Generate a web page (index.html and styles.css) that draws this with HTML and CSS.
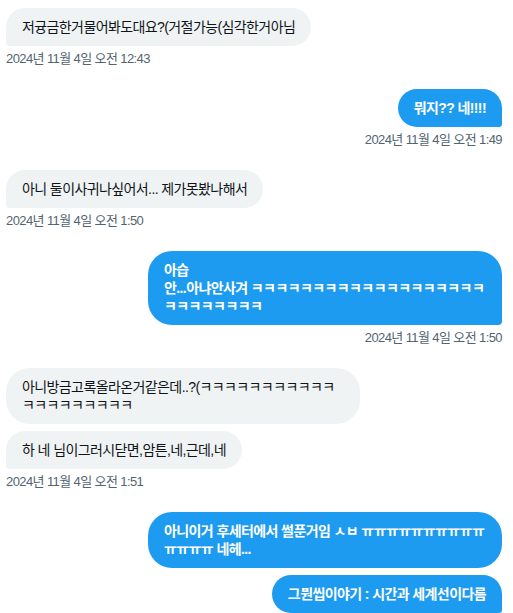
FILE: index.html
```html
<!DOCTYPE html>
<html lang="ko">

<head>
    <meta charset="UTF-8">
    <meta name="viewport" content="width=device-width, initial-scale=1.0">
    <title>메시지</title>
    <link rel="stylesheet" href="styles.css">
</head>

<body>
    <div class="chat">
        <div class="group in">
            <div class="bubble">저귱금한거물어봐도대요?(거절가능(심각한거아님</div>
            <div class="time">2024년 11월 4일 오전 12:43</div>
        </div>

        <div class="group out">
            <div class="bubble">뭐지?? 네!!!!</div>
            <div class="time">2024년 11월 4일 오전 1:49</div>
        </div>

        <div class="group in">
            <div class="bubble">아니 둘이사귀나싶어서... 제가못봤나해서</div>
            <div class="time">2024년 11월 4일 오전 1:50</div>
        </div>

        <div class="group out">
            <div class="bubble">아습<br>안...아냐안사겨 ㅋㅋㅋㅋㅋㅋㅋㅋㅋㅋㅋㅋㅋㅋㅋㅋㅋㅋㅋㅋㅋㅋㅋㅋㅋㅋㅋ</div>
            <div class="time">2024년 11월 4일 오전 1:50</div>
        </div>

        <div class="group in">
            <div class="bubble">아니방금고록올라온거같은데..?(ㅋㅋㅋㅋㅋㅋㅋㅋㅋㅋㅋㅋㅋㅋㅋㅋㅋㅋㅋㅋ</div>
            <div class="bubble">하 네 님이그러시닫면,암튼,네,근데,네</div>
            <div class="time">2024년 11월 4일 오전 1:51</div>
        </div>

        <div class="group out">
            <div class="bubble">아니이거 후세터에서 썰푼거임 ㅅㅂ ㅠㅠㅠㅠㅠㅠㅠㅠㅠㅠㅠㅠㅠㅠ 네헤...</div>
            <div class="bubble">그뭔씹이야기 : 시간과 세계선이다름</div>
            <div class="time">2024년 11월 4일 오전 1:52</div>
        </div>
    </div>
</body>

</html>
```

FILE: styles.css
```css
body {
    margin: 0;
    background-color: #fff;
    font-family: 'Liberation Sans', 'Noto Sans CJK KR', sans-serif;
}

.chat {
    padding: 8px 11px 0 6px;
}

.group {
    display: flex;
    flex-direction: column;
    align-items: flex-start;
    margin-bottom: 22px;
}

.group.out {
    align-items: flex-end;
}

.bubble {
    box-sizing: border-box;
    max-width: 354px;
    padding: 10px 16px;
    font-size: 14px;
    line-height: 18px;
    letter-spacing: -0.6px;
    border-radius: 24px;
    word-break: break-all;
}

.bubble + .bubble {
    margin-top: 7px;
}

.in .bubble {
    background-color: #eff3f4;
    color: #0f1419;
}

.in .bubble:nth-last-child(2) {
    border-bottom-left-radius: 4px;
}

.out .bubble {
    background-color: #1d9bf0;
    color: #fff;
    font-weight: 700;
}

.out .bubble:nth-last-child(2) {
    border-bottom-right-radius: 4px;
}

.time {
    margin-top: 5px;
    font-size: 13px;
    line-height: 16px;
    letter-spacing: -0.6px;
    color: #536471;
}
```
